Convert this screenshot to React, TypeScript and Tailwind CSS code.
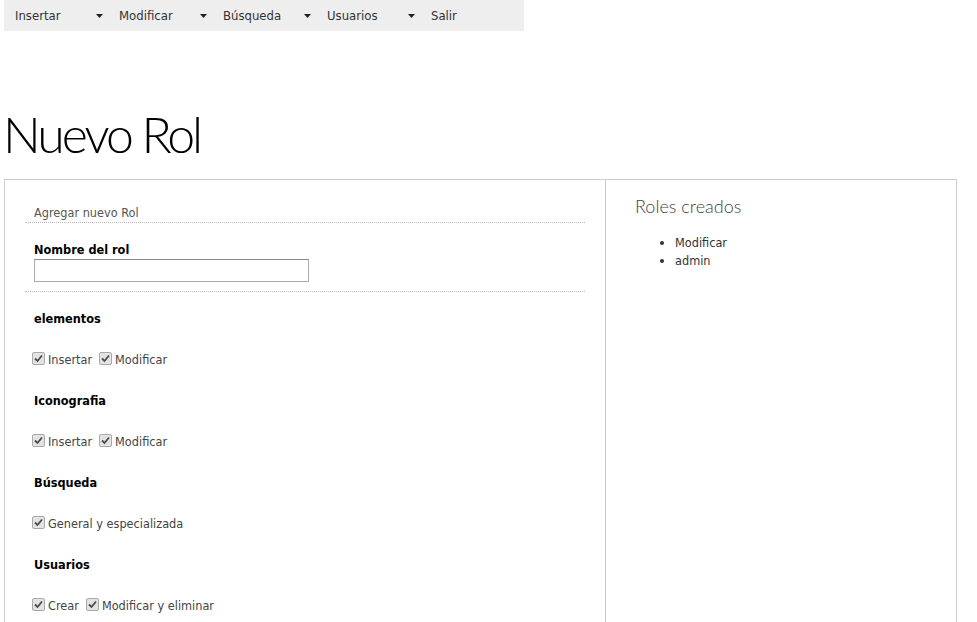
import React from "react";

const font = { fontFamily: '"DejaVu Sans Condensed", "DejaVu Sans", sans-serif' };
const thin = { fontFamily: 'Lato, "Open Sans", sans-serif' };

function Check() {
  return (
    <span className="inline-flex w-[13px] h-[13px] border border-[#a9a9a9] bg-[#e3e3e3] rounded-[2px] items-center justify-center self-start mt-[1px]">
      <svg width="9" height="9" viewBox="0 0 9 9">
        <path d="M1 4.5 L3.5 7 L8 1.5" stroke="#4a4a4a" strokeWidth="1.8" fill="none" />
      </svg>
    </span>
  );
}

function CheckItem({ label }: { label: string }) {
  return (
    <span className="inline-flex items-start">
      <Check />
      <span className="ml-[3px] text-[#444]">{label}</span>
    </span>
  );
}

function Heading({ text }: { text: string }) {
  return <div className="h-[18px] leading-[18px] pl-[9px] font-bold text-black mt-[23px]">{text}</div>;
}

function Checks({ items }: { items: string[] }) {
  return (
    <div className="h-[18px] leading-[18px] pl-[7px] mt-[23px] flex gap-[7px]">
      {items.map((i) => (
        <CheckItem key={i} label={i} />
      ))}
    </div>
  );
}

export default function App() {
  const menu = ["Insertar", "Modificar", "Búsqueda", "Usuarios", "Salir"];
  return (
    <div className="bg-white min-h-[622px] text-[12.6px] text-[#333]" style={font}>
      <nav className="ml-[4px] w-[520px] h-[31px] bg-[#eeeeee] flex text-[13px]">
        {menu.map((m, idx) => (
          <div key={m} className="relative w-[104px] h-full flex items-center pl-[11px] pt-[1px] text-[#333]">
            <span>{m}</span>
            {idx < 4 && (
              <svg className="absolute left-[92px] top-[14px]" width="7" height="4" viewBox="0 0 7 4">
                <path d="M0 0 H7 L3.5 4 Z" fill="#222" />
              </svg>
            )}
          </div>
        ))}
      </nav>
      <h1
        className="ml-[3px] mt-[76px] mb-[18px] text-[50px] leading-[54px] font-light tracking-[-3px] text-black"
        style={thin}
      >
        Nuevo Rol
      </h1>
      <div className="ml-[4px] w-[953px] border border-[#cccccc] flex min-h-[460px]">
        <div className="w-[601px] border-r border-[#cccccc] px-[20px]">
          <div className="mt-[24px] pl-[9px] leading-[18px] border-b border-dotted border-[#bbbbbb] text-[#555]">
            Agregar nuevo Rol
          </div>
          <div className="mt-[18px] pl-[9px] leading-[18px] font-bold text-black">Nombre del rol</div>
          <div className="pl-[9px]">
            <input
              type="text"
              className="block w-[275px] h-[23px] border border-[#aaaaaa] border-t-[#888888] bg-white outline-none"
            />
          </div>
          <div className="mt-[9px] border-b border-dotted border-[#bbbbbb]" />
          <div className="-mt-[5px]">
            <Heading text="elementos" />
            <Checks items={["Insertar", "Modificar"]} />
            <Heading text="Iconografia" />
            <Checks items={["Insertar", "Modificar"]} />
            <Heading text="Búsqueda" />
            <Checks items={["General y especializada"]} />
            <Heading text="Usuarios" />
            <Checks items={["Crear", "Modificar y eliminar"]} />
          </div>
        </div>
        <div className="flex-1 pl-[29px] pt-[15px]">
          <h2 className="text-[18px] leading-[22px] font-light text-[#444]" style={thin}>
            Roles creados
          </h2>
          <ul className="mt-[17px] pl-[40px] list-disc leading-[18px] text-[#333]">
            <li>Modificar</li>
            <li>admin</li>
          </ul>
        </div>
      </div>
    </div>
  );
}
